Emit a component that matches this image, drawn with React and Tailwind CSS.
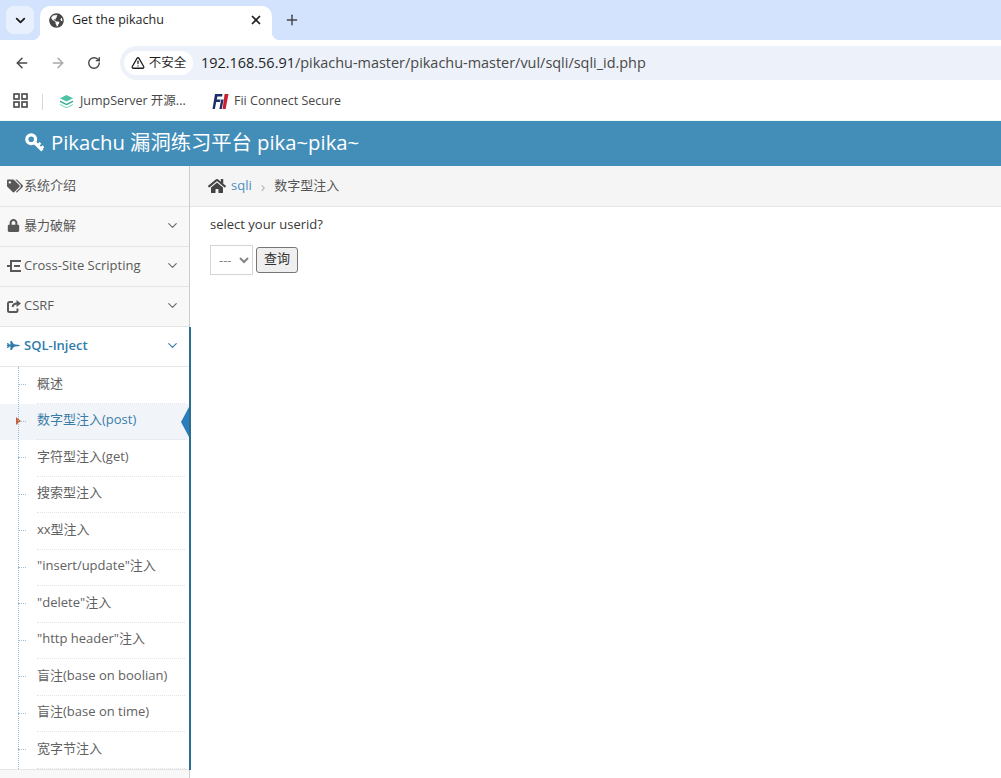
import { ArrowLeft, ArrowRight, RotateCw, TriangleAlert, ChevronDown, X, Plus } from "lucide-react"
import { FaTags, FaLock, FaFighterJet, FaHome, FaGlobeAmericas } from "react-icons/fa"

const cjk = "font-['Open_Sans','Noto_Sans_CJK_SC',sans-serif]"

const subItems = [
  "概述",
  "数字型注入(post)",
  "字符型注入(get)",
  "搜索型注入",
  "xx型注入",
  '"insert/update"注入',
  '"delete"注入',
  '"http header"注入',
  "盲注(base on boolian)",
  "盲注(base on time)",
  "宽字节注入",
]

function TabBar() {
  return (
    <div className="relative flex h-10 items-end bg-[#d3e3fd] pl-[6px]">
      <div className="mb-[6px] flex h-7 w-7 items-center justify-center rounded-lg bg-[#e9f0fd]">
        <ChevronDown size={15} strokeWidth={3} className="text-[#1f1f1f]" />
      </div>
      <div className="relative ml-[6px] flex h-[34px] w-[232px] items-center rounded-t-[10px] bg-white pb-[6px] pl-[9px] pr-[9px]">
        <span className="absolute bottom-0 -left-2 h-2 w-2 bg-[radial-gradient(circle_at_0_0,#d3e3fd_8px,#ffffff_8.5px)]" />
        <FaGlobeAmericas size={15} className="text-[#474747]" />
        <span className="ml-[8px] flex-1 text-[12.5px] text-[#1f1f1f]">Get the pikachu</span>
        <X size={14} strokeWidth={3} className="text-[#1f1f1f]" />
        <span className="absolute bottom-0 -right-2 h-2 w-2 bg-[radial-gradient(circle_at_100%_0,#d3e3fd_8px,#ffffff_8.5px)]" />
      </div>
      <div className="mb-[6px] ml-[6px] flex h-7 w-7 items-center justify-center">
        <Plus size={16} strokeWidth={2.2} className="text-[#474747]" />
      </div>
    </div>
  )
}

function AddressBar() {
  return (
    <div className="flex h-10 items-end bg-white pl-[14px]">
      <div className="flex h-[34px] items-center">
        <ArrowLeft size={16} strokeWidth={2.2} className="text-[#474747]" />
        <ArrowRight size={16} strokeWidth={2.2} className="ml-5 text-[#a8a8a8]" />
        <RotateCw size={14} strokeWidth={2.4} className="ml-[21px] text-[#474747]" />
      </div>
      <div className="ml-[19px] flex h-[34px] flex-1 items-center rounded-l-[17px] bg-[#edf2fa] pl-[4px]">
        <div className="flex h-6 w-[69px] items-center justify-center gap-[4px] rounded-full bg-white">
          <TriangleAlert size={14} strokeWidth={2.2} className="text-[#1f1f1f]" />
          <span className="text-[12.5px] text-[#1f1f1f]">不安全</span>
        </div>
        <span className="ml-[8px] text-[14.45px] text-[#1f1f1f]">192.168.56.91<span className="text-[#474747]">/pikachu-master/pikachu-master/vul/sqli/sqli_id.php</span></span>
      </div>
    </div>
  )
}

function BookmarkBar() {
  return (
    <div className="flex h-[41px] items-center border-b border-[#eefbfb] bg-white pl-[13px] pt-[3px]">
      <svg className="-mt-[2px]" width="15" height="15" viewBox="0 0 15 15" fill="none" stroke="#474747" strokeWidth="1.6">
        <rect x="1" y="1" width="5" height="5" />
        <rect x="9" y="1" width="5" height="5" />
        <rect x="1" y="9" width="5" height="5" />
        <rect x="9" y="9" width="5" height="5" />
      </svg>
      <div className="ml-[14px] h-4 w-px bg-[#d5d9de]" />
      <svg className="ml-4" width="15" height="15" viewBox="0 0 15 15">
        <path d="M7.5 1 14 4.2 7.5 7.4 1 4.2Z" fill="#4cc3a5" />
        <path d="M1 6.6 7.5 9.8 14 6.6V8L7.5 11.2 1 8Z" fill="#2fa98c" />
        <path d="M1 10 7.5 13.2 14 10V11L7.5 14.2 1 11Z" fill="#6fd4bb" />
      </svg>
      <span className="ml-[6px] w-[127px] text-[12.5px] text-[#474747]">JumpServer 开源...</span>
      <svg className="ml-[5px]" width="17" height="17" viewBox="0 0 17 17">
        <path d="M3 1H10.5L10 3.5H5.4L4.8 6.5H8.6L8.1 9H4.2L2.9 16H0.5Z" fill="#1b2f6b" />
        <path d="M9.2 6.5H11.6L9.8 16H7.4Z" fill="#1b2f6b" />
        <path d="M12.6 1H16.5L13.6 16H10.6Z" fill="#c8202f" />
      </svg>
      <span className="ml-[5px] text-[12.5px] text-[#474747]">Fii Connect Secure</span>
    </div>
  )
}

function KeyIcon() {
  return (
    <svg className="mr-[7px]" width="19" height="19" viewBox="0 0 19 19" fill="none" stroke="#ffffff" strokeWidth="3.2">
      <circle cx="6.2" cy="6.2" r="4.4" />
      <path d="M9 9 17.4 17.4" />
      <path d="M12.6 12.6 15.4 9.8M15.8 15.8 18.4 13.2" strokeWidth="2.6" />
    </svg>
  )
}

function TreeIcon() {
  return (
    <svg width="14" height="14" viewBox="0 0 14 14" fill="#585858">
      <rect x="0" y="6" width="3" height="2" />
      <rect x="3" y="1" width="2" height="12" />
      <rect x="5" y="1" width="9" height="2" />
      <rect x="7" y="6" width="6" height="2" />
      <rect x="5" y="11" width="9" height="2" />
    </svg>
  )
}

function ShareIcon() {
  return (
    <svg width="14" height="14" viewBox="0 0 14 14" fill="none" stroke="#585858" strokeWidth="2">
      <path d="M10.5 9.5V11.5A1.5 1.5 0 0 1 9 13H2.5A1.5 1.5 0 0 1 1 11.5V4.5A1.5 1.5 0 0 1 2.5 3H6" />
      <path d="M5.5 8C6 5.5 8 4.5 10 4.5" />
      <path d="M9.5 1 14 4.5 9.5 8Z" fill="#585858" stroke="none" />
    </svg>
  )
}

function NavRow({ icon, label, arrow = true, active = false }) {
  return (
    <div className={`flex h-10 items-center border-b border-[#e5e5e5] pb-[2px] pl-[7px] pr-[9px] text-[13px] ${active ? "bg-white font-semibold text-[#2f7bad]" : "bg-[#f8f8f8] text-[#585858]"}`}>
      <span className="flex w-[17px] shrink-0 items-center">{icon}</span>
      <span className="flex-1">{label}</span>
      {arrow && <ChevronDown size={15} strokeWidth={1.8} className={active ? "text-[#2f7bad]" : "text-[#666666]"} />}
    </div>
  )
}

function SubItem({ label, active }) {
  return (
    <div className={`relative flex h-[36.5px] items-center pb-[4px] pl-[37px] text-[13px] ${active ? "bg-[#f1f5f9] text-[#3a7ca8]" : "bg-white text-[#616161]"}`}>
      <span className="absolute left-[18px] top-[17px] w-[8px] border-t border-dotted border-[#9dbdd6]" />
      {active && <span className="absolute left-[16px] top-[13px] border-y-4 border-l-[5px] border-y-transparent border-l-[#c86139]" />}
      {label}
      {active && <span className="absolute right-0 top-[3px] border-y-[15px] border-r-[8px] border-y-transparent border-r-[#2b7dbc]" />}
      <span className="absolute bottom-0 left-[37px] right-[4px] border-b border-dotted border-[#e4e4e4]" />
    </div>
  )
}

function Sidebar() {
  return (
    <div className="flex w-[190px] shrink-0 flex-col border-r border-[#cccccc] bg-[#f8f8f8] pt-px">
      <NavRow arrow={false} icon={<FaTags size={16} className="text-[#585858]" />} label="系统介绍" />
      <NavRow icon={<FaLock size={13} className="text-[#585858]" />} label="暴力破解" />
      <NavRow icon={<TreeIcon />} label="Cross-Site Scripting" />
      <NavRow icon={<ShareIcon />} label="CSRF" />
      <div className="-mr-[2px] border-r-2 border-[#2b6d8f]">
        <NavRow active icon={<FaFighterJet size={13} className="text-[#2f7bad]" />} label="SQL-Inject" />
        <div className="relative border-b border-[#e5e5e5] bg-white">
          {subItems.map((s, i) => <SubItem key={s} label={s} active={i === 1} />)}
          <span className="absolute bottom-0 left-[18px] top-0 border-l border-dotted border-[#9dbdd6]" />
        </div>
      </div>
    </div>
  )
}

export default function App() {
  return (
    <div className={`flex h-[778px] flex-col overflow-hidden bg-white ${cjk}`}>
      <TabBar />
      <AddressBar />
      <BookmarkBar />
      <div className="flex h-[45px] shrink-0 items-center bg-[#438eb9] pb-[2px] pl-[25px] text-[20.3px] text-white">
        <KeyIcon />
        Pikachu 漏洞练习平台 pika~pika~
      </div>
      <div className="flex flex-1">
        <Sidebar />
        <div className="flex-1">
          <div className="flex h-[41px] items-center border-b border-[#e5e5e5] bg-[#f5f5f5] pl-[18px] text-[13px]">
            <FaHome size={18} className="text-[#444444]" />
            <span className="ml-[5px] text-[#4c8fbd]">sqli</span>
            <span className="ml-[9px] text-[15px] leading-none text-[#b2b6bf]">›</span>
            <span className="ml-[9px] text-[#555555]">数字型注入</span>
          </div>
          <div className="pl-5 pt-2">
            <p className="text-[13px] leading-[18px] text-[#393939]">select your userid?</p>
            <div className="mt-[12px] flex items-center gap-[3px]">
              <select className="h-[30px] w-[43px] border border-[#d5d5d5] bg-white pl-[4px] text-[13px] text-[#858585]">
                <option>---</option>
              </select>
              <button className="h-[26px] w-[42px] rounded-[3px] border border-[#767676] bg-[#efefef] pb-[2px] text-[13px] text-[#333333]">查询</button>
            </div>
          </div>
        </div>
      </div>
    </div>
  )
}
